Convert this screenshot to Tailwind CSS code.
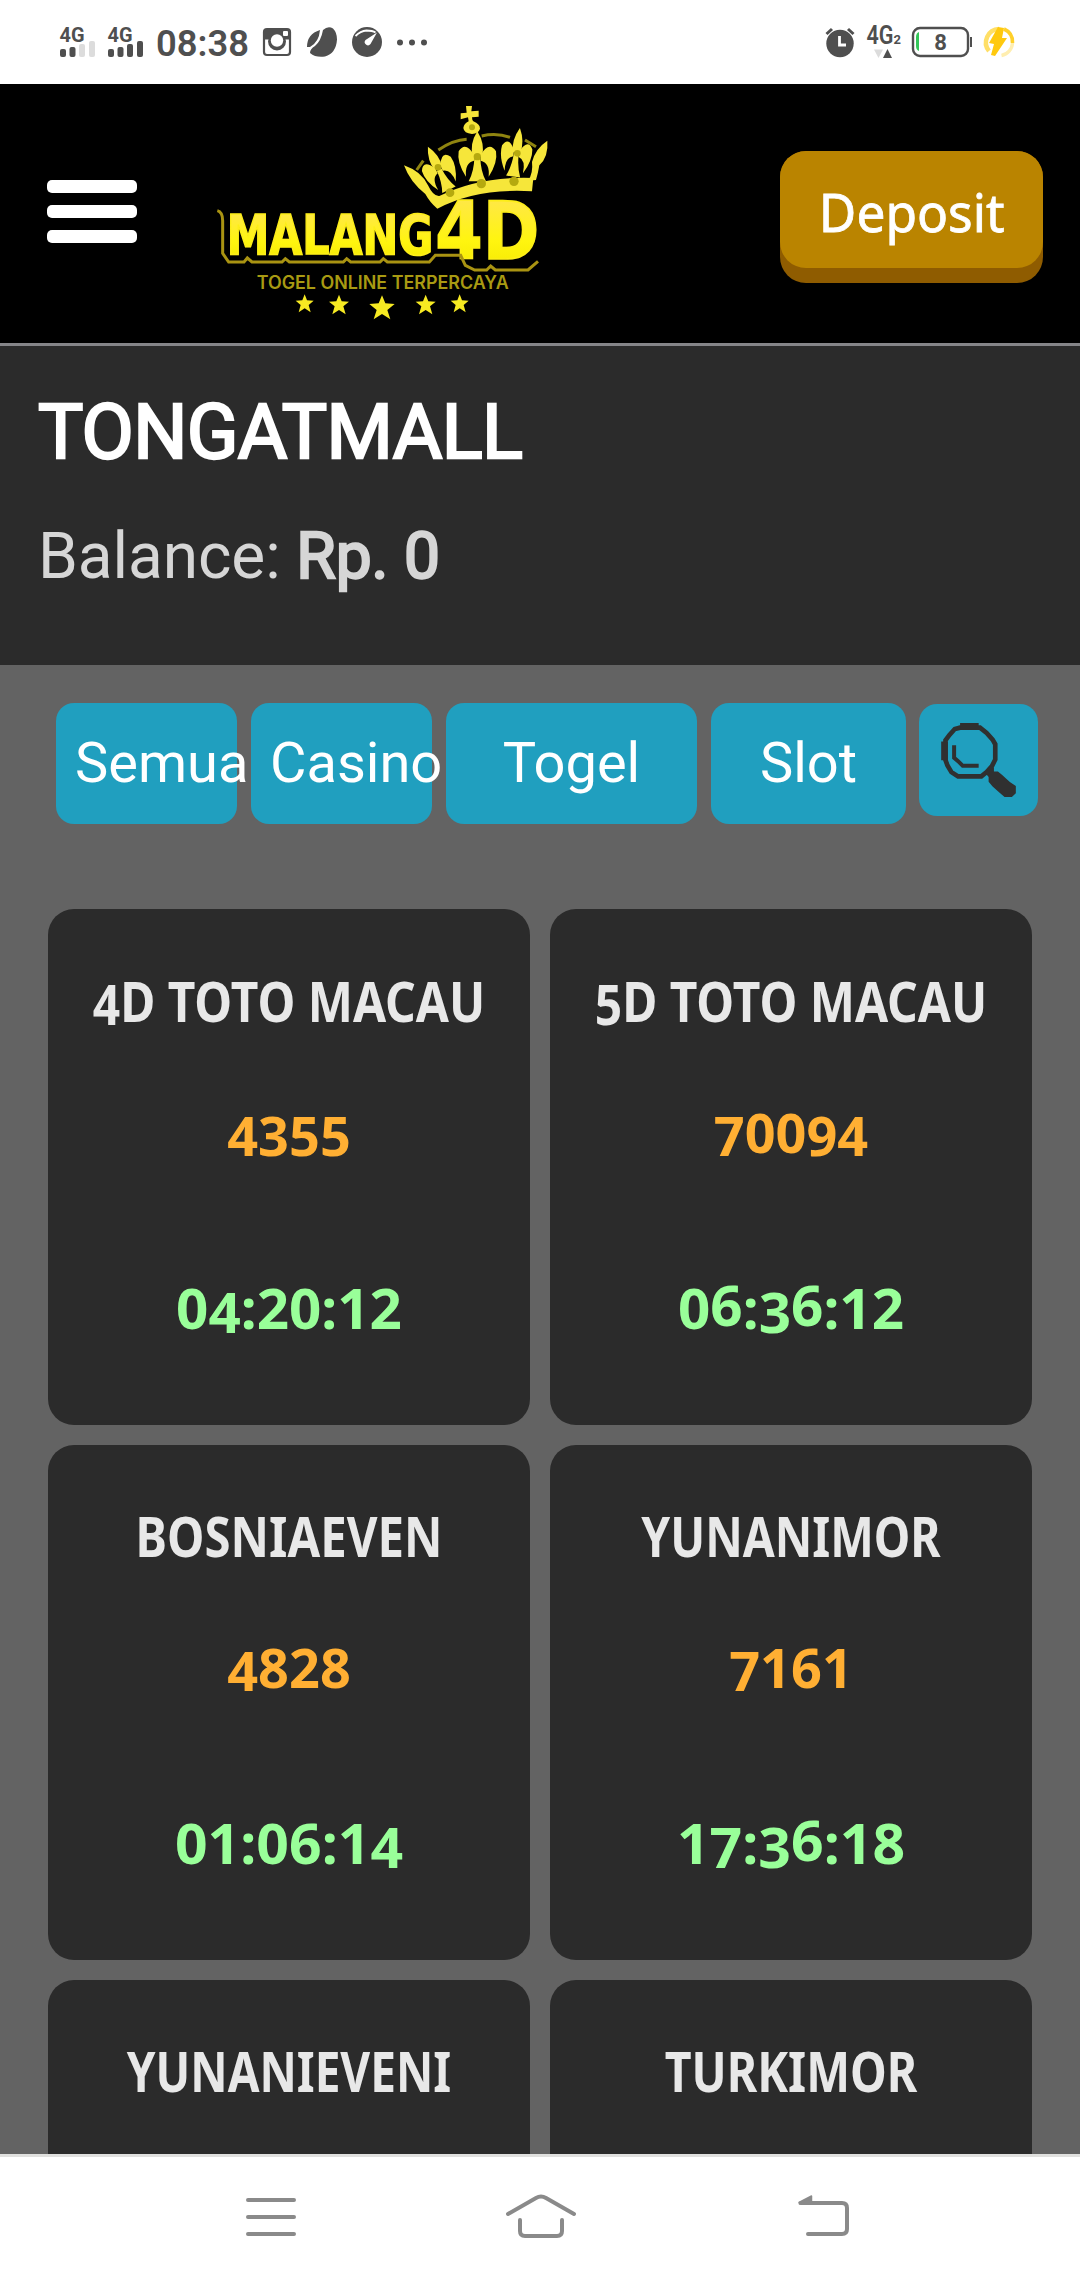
<!DOCTYPE html>
<html lang="id">
<head>
<meta charset="utf-8">
<title>Malang4D</title>
<script src="https://cdn.jsdelivr.net/npm/@tailwindcss/browser@4"></script>
</head>
<body class="bg-[#636363]">
<div class="flex h-[2280px] w-[1080px] flex-col overflow-hidden bg-[#636363] font-['Roboto',sans-serif]">

  <!-- Status bar -->
  <div class="h-[84px] shrink-0 bg-white">
    <svg class="block" width="1080" height="84" viewBox="0 0 1080 84" fill="#4f4f4f" font-family="Roboto, sans-serif">
      <g font-weight="700" font-size="21">
        <text x="59.500" y="42" textLength="25" lengthAdjust="spacingAndGlyphs">4G</text>
        <text x="107.500" y="42" textLength="25" lengthAdjust="spacingAndGlyphs">4G</text>
      </g>
      <rect x="60" y="49" width="6" height="8" rx="2"/><rect x="69.500" y="47" width="6" height="10" rx="2"/>
      <rect x="79" y="44" width="6" height="13" rx="2" fill="#dcdcdc"/><rect x="89" y="41" width="6" height="16" rx="2" fill="#dcdcdc"/>
      <rect x="108" y="49" width="6" height="8" rx="2"/><rect x="117.500" y="47" width="6" height="10" rx="2"/>
      <rect x="127" y="44" width="6" height="13" rx="2"/><rect x="137" y="41" width="6" height="16" rx="2"/>
      <text x="156" y="56" font-size="37" font-weight="600" textLength="93" lengthAdjust="spacingAndGlyphs">08:38</text>
      <!-- camera -->
      <rect x="264" y="29" width="26" height="26" rx="3" fill="none" stroke="#4f4f4f" stroke-width="2.200"/>
      <path d="M264 29h26v10.500h-26z"/>
      <circle cx="277" cy="41.500" r="9"/><circle cx="277" cy="40.500" r="6.200" fill="#fff"/>
      <rect x="283" y="31" width="5" height="5" rx="1" fill="#fff"/>
      <!-- bean -->
      <path d="M320 30q-13 4-13 17l3 0q9-5 10-17zM323 30q-2 11-8 16q-5 3-5 7q6 5 15 3.500q11-3 12-17q0-7-4-11q-5-3-10 1.500z"/>
      <!-- gauge -->
      <circle cx="367" cy="42" r="15"/>
      <path d="M355.500 36q5-5 11-5.500q6 0 9 2" fill="none" stroke="#fff" stroke-width="1.800"/>
      <path d="M377 32.500l-6.500 11.500a3.200 3.200 0 1 1-5-4z" fill="#fff"/>
      <circle cx="400" cy="42.500" r="3"/><circle cx="412" cy="42.500" r="3"/><circle cx="424" cy="42.500" r="3"/>
      <!-- alarm -->
      <circle cx="840" cy="43.500" r="13.700"/>
      <path d="M826.500 34l5.500-5M853.500 34l-5.500-5" stroke="#4f4f4f" stroke-width="3"/>
      <path d="M839.500 36v9h6.500" fill="none" stroke="#fff" stroke-width="2.800"/>
      <text x="866.500" y="43.500" font-size="25" font-weight="600" textLength="27" lengthAdjust="spacingAndGlyphs">4G</text>
      <text x="893.500" y="44" font-size="13" font-weight="700">2</text>
      <path d="M874 49.500h9l-4.500 8.500z" fill="#dcdcdc"/><path d="M883 58h9l-4.500-9z"/>
      <!-- battery -->
      <rect x="913" y="28" width="55" height="28" rx="7" fill="none" stroke="#4f4f4f" stroke-width="2.400"/>
      <rect x="970" y="37" width="2" height="10"/>
      <path d="M919 32v19q-3-1-3-5V37q0-4 3-5z" fill="#34c759"/>
      <text x="940.500" y="50" text-anchor="middle" font-size="22" font-weight="700">8</text>
      <!-- fast charge -->
      <path d="M1012.500 43a13.500 13.500 0 0 1-11 12.500" fill="none" stroke="#ffeeb0" stroke-width="3.400"/>
      <path d="M999 29a13.500 13.500 0 0 0-10 22" fill="none" stroke="#ffdf66" stroke-width="4.500"/>
      <path d="M1004 29q9 4 8.500 14" fill="none" stroke="#ffd02a" stroke-width="3.600"/>
      <path d="M998 27l6 1-2 10h5l-12 18-4-1 3-11-5-1z" fill="#ffc90e"/>
    </svg>
  </div>

  <!-- Header -->
  <header class="flex h-[262px] shrink-0 items-start border-b-3 border-[#858588] bg-black">
    <div class="mt-[96px] ml-[47px] flex w-[90px] flex-col gap-3">
      <span class="h-[13px] rounded-[5px] bg-white"></span>
      <span class="h-[13px] rounded-[5px] bg-white"></span>
      <span class="h-[13px] rounded-[5px] bg-white"></span>
    </div>
    <svg class="mt-[6px] ml-[63px] block" width="360" height="250" viewBox="0 0 1080 750">
      <defs>
        <linearGradient id="gold" x1="0" y1="0" x2="0" y2="1"><stop offset="0" stop-color="#ffe35a"/><stop offset=".6" stop-color="#fff50f"/><stop offset="1" stop-color="#f2e600"/></linearGradient>
        <g id="fleur">
          <path d="M0-72Q24-34 14 4H-14Q-24-34 0-72z"/>
          <path d="M-10-2Q-36-44-56-12Q-62 22-34 64Q-38 22-10 16z"/>
          <path d="M10-2Q36-44 56-12Q62 22 34 64Q38 22 10 16z"/>
          <path d="M-9 8H9Q10 48 26 78H-26Q-10 48-9 8z"/>
        </g>
      </defs>
      <!-- crown -->
      <path d="M715 180Q760 150 800 148M845 138Q890 128 930 142M975 150L1008 170M650 240l20-28" fill="none" stroke="#8f8410" stroke-width="9"/>
      <g fill="#f6e63a">
        <path d="M612 226Q664 244 684 286Q700 320 718 318Q840 258 1000 264L996 304Q830 294 712 356Q690 338 676 312Q630 276 612 226z"/>
        <path d="M1042 152Q1046 200 1018 226Q1014 250 1008 270L984 272Q1000 250 996 216Q1006 176 1042 152z"/>
        <use href="#fleur" transform="translate(832 196)"/>
        <use href="#fleur" transform="translate(950 184) rotate(8) scale(.82 .98)"/>
        <use href="#fleur" transform="translate(714 232) rotate(-26) scale(.86 .96)"/>
        <path d="M798 48h18l-2 16 22-2v18l-20 2q0 8 4 12 20 8 20 22-4 14-24 16-24-2-26-18 2-14 16-20l-2-12-22 6v-18l18-2z"/>
      </g>
      <g fill="#b5a90f"><circle cx="750" cy="308" r="13"/><circle cx="844" cy="281" r="14"/><circle cx="942" cy="274" r="14"/><circle cx="832" cy="200" r="11"/><circle cx="952" cy="190" r="10"/><circle cx="714" cy="232" r="10"/><circle cx="816" cy="112" r="9"/></g>
      <!-- word mark -->
      <g font-family="'DejaVu Sans', sans-serif" font-weight="700" fill="url(#gold)" stroke="#fdee18" stroke-width="5">
        <text x="80" y="492" font-size="166" textLength="620" lengthAdjust="spacingAndGlyphs">MALANG</text>
        <text x="706" y="507" font-size="238" textLength="312" lengthAdjust="spacingAndGlyphs">4D</text>
      </g>
      <path d="M52 362Q68 366 68 392V490L86 516H132L142 504 156 516H246L256 506 268 516H430L440 506 452 516H540L550 506 562 516H688L706 496H782L796 526 824 540H860L872 528 886 540H984L1014 514" fill="none" stroke="#a99312" stroke-width="9"/>
      <text x="170" y="597" font-family="Inter, sans-serif" font-size="54" font-weight="600" fill="#a89a12" textLength="756" lengthAdjust="spacingAndGlyphs">TOGEL ONLINE TERPERCAYA</text>
      <g fill="#f7ea22">
        <path d="M546 616l10 24 28 2-22 18 9 28-25-16-25 16 9-28-22-18 28-2z"/>
        <path d="M417 614l8 20 22 1-17 14 7 24-20-13-20 13 7-24-17-14 22-1z"/>
        <path d="M677 614l8 20 22 1-17 14 7 24-20-13-20 13 7-24-17-14 22-1z"/>
        <path d="M314 613l7 18 20 1-15 13 6 22-18-12-18 12 6-22-15-13 20-1z"/>
        <path d="M779 613l7 18 20 1-15 13 6 22-18-12-18 12 6-22-15-13 20-1z"/>
      </g>
    </svg>
    <button class="mt-[67px] ml-[220px] flex h-[132px] w-[263px] items-start rounded-[26px] bg-[#8f5c00]">
      <span class="flex h-[117px] w-full items-center justify-center rounded-[26px] bg-[#ba8400] pt-[3px] font-['Noto_Sans',sans-serif] text-[53px] leading-none text-white"><span class="scale-x-[.97] [-webkit-text-stroke:0.8px_white]">Deposit</span></span>
    </button>
  </header>

  <!-- Account -->
  <section class="h-[319px] shrink-0 bg-[#2b2b2b] pt-[46px] pl-[38px]">
    <h1 class="text-[76px] leading-[80px] tracking-[-0.7px] text-white [-webkit-text-stroke:2.4px_white]">TONGATMALL</h1>
    <p class="mt-[45px] text-[64px] leading-[80px] tracking-[-0.1px] text-[#d6d6d6]">Balance: <span class="[-webkit-text-stroke:2.4px_#d6d6d6]">Rp. 0</span></p>
  </section>

  <!-- Filters -->
  <nav class="flex shrink-0 items-start pt-[38px] pl-[56px] text-[56px] leading-[121px] text-white">
    <div class="mr-[14px] h-[121px] w-[181px] rounded-[18px] bg-[#209fbf] pl-[19px]">Semua</div>
    <div class="mr-[14px] h-[121px] w-[181px] rounded-[18px] bg-[#209fbf] pl-[19px]">Casino</div>
    <div class="mr-[14px] h-[121px] w-[251px] rounded-[18px] bg-[#209fbf] text-center">Togel</div>
    <div class="mr-[13px] h-[121px] w-[195px] rounded-[18px] bg-[#209fbf] text-center">Slot</div>
    <div class="mt-px h-[112px] w-[119px] rounded-[18px] bg-[#209fbf] pt-[19px] pl-[22px]">
      <svg class="block" width="75" height="74" viewBox="1023 128 225 223" fill="none" stroke="#303030">
        <path d="M1080 142H1140L1160 158L1178 178L1186 192V238L1176 258L1160 276L1144 289H1074L1054 276L1042 256L1036 240V180L1048 164L1064 146Z" stroke-width="14"/>
        <path d="M1080 128h56v20h-56zM1023 184h20v56h-20z" fill="#303030" stroke="none"/>
        <path d="M1062 195v38l12 10 14 14h48" stroke-width="12"/>
        <path d="M1168 262h14v12h12l12 10 24 22 18 12v22l-12 11h-22l-14-12-22-20-12-14v-14l-10-12z" fill="#303030" stroke="none"/>
      </svg>
    </div>
  </nav>

  <!-- Markets -->
  <main class="mt-[85px] grid min-h-0 flex-1 grid-cols-[482px_482px] auto-rows-[515.5px] content-start gap-5 overflow-hidden pl-12 text-center font-['Noto_Sans',sans-serif] text-[56px] leading-[80px] font-bold whitespace-nowrap">
    <article class="rounded-[26px] bg-[#2b2b2b] pt-[51px]">
      <h2 class="scale-x-[.855] text-[#e8e8e8]"><span class="align-[-3px] leading-none">4</span>D TOTO MACAU</h2>
      <p class="mt-[52px] text-[54px] text-[#ffaf33]"><span class="align-[-3px] leading-none">4355</span></p>
      <p class="mt-[95px] scale-x-[1.01] text-[#99ff99]">0<span class="align-[-4px] leading-none">4</span>:20:12</p>
    </article>
    <article class="rounded-[26px] bg-[#2b2b2b] pt-[51px]">
      <h2 class="scale-x-[.855] text-[#e8e8e8]"><span class="align-[-3px] leading-none">5</span>D TOTO MACAU</h2>
      <p class="mt-[52px] text-[54px] text-[#ffaf33]"><span class="align-[-3px] leading-none">7</span>00<span class="align-[-3px] leading-none">94</span></p>
      <p class="mt-[95px] scale-x-[1.01] text-[#99ff99]">0<span class="align-[3px] leading-none">6</span>:<span class="align-[-4px] leading-none">3</span><span class="align-[3px] leading-none">6</span>:12</p>
    </article>
    <article class="rounded-[26px] bg-[#2b2b2b] pt-[50px]">
      <h2 class="scale-x-[.845] text-[#e8e8e8]">BOSNIAEVEN</h2>
      <p class="mt-[52px] text-[54px] text-[#ffaf33]"><span class="align-[-3px] leading-none">4</span>828</p>
      <p class="mt-[95px] scale-x-[1.02] text-[#99ff99]">01:06:1<span class="align-[-4px] leading-none">4</span></p>
    </article>
    <article class="rounded-[26px] bg-[#2b2b2b] pt-[50px]">
      <h2 class="scale-x-[.825] text-[#e8e8e8]">YUNANIMOR</h2>
      <p class="mt-[52px] text-[54px] text-[#ffaf33]"><span class="align-[-3px] leading-none">7</span>161</p>
      <p class="mt-[95px] scale-x-[1.02] text-[#99ff99]">1<span class="align-[-4px] leading-none">7</span>:<span class="align-[-4px] leading-none">3</span><span class="align-[3px] leading-none">6</span>:18</p>
    </article>
    <article class="rounded-[26px] bg-[#2b2b2b] pt-[50px]">
      <h2 class="scale-x-[.82] text-[#e8e8e8]">YUNANIEVENI</h2>
    </article>
    <article class="rounded-[26px] bg-[#2b2b2b] pt-[50px]">
      <h2 class="scale-x-[.83] text-[#e8e8e8]">TURKIMOR</h2>
    </article>
  </main>

  <!-- System navigation -->
  <footer class="flex h-[126px] shrink-0 border-t-3 border-[#e0e0de] bg-white">
    <svg class="block" width="1080" height="123" viewBox="0 2157 1080 123" fill="none" stroke="#8a8a8a" stroke-width="4" stroke-linecap="round" stroke-linejoin="round">
      <path d="M248 2200h46M248 2217h46M248 2234h46"/>
      <path d="M508 2214l28-16q5-3 10 0l28 16"/>
      <path d="M520 2220v11q0 5 5 5h32q5 0 5-5v-11"/>
      <path d="M808 2234h34q5 0 5-5v-21q0-5-5-5h-41"/>
      <path d="M799 2202.500l12.500-6.500v8h-12z" fill="#8a8a8a" stroke-width="1.500"/>
    </svg>
  </footer>
</div>
</body>
</html>
